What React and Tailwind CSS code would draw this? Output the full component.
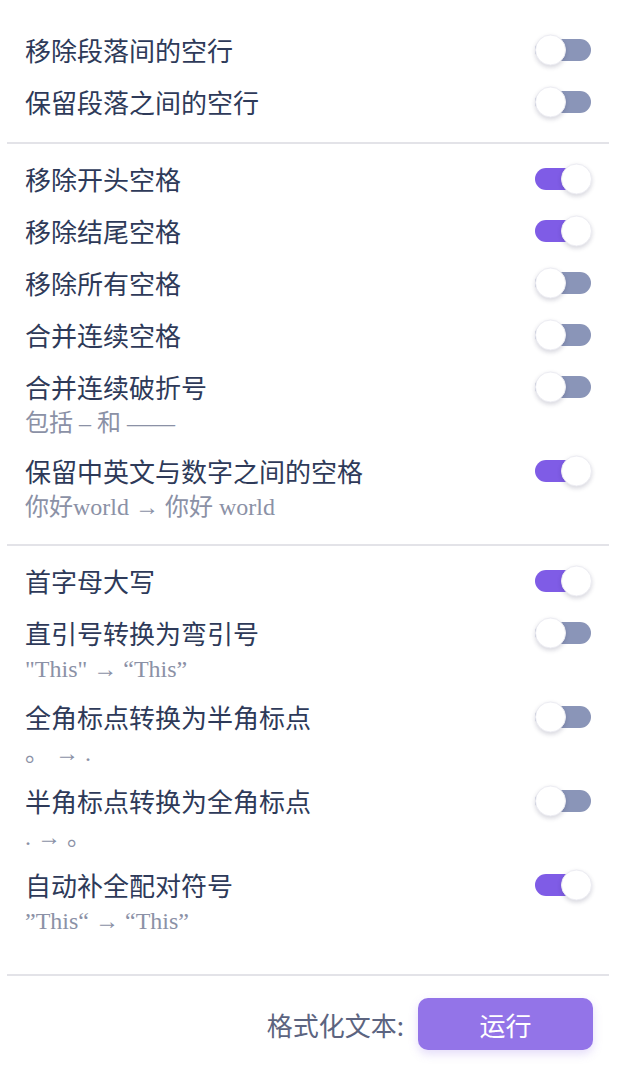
import React from "react";

const sans = { fontFamily: '"Noto Sans CJK SC", "Noto Sans", sans-serif' };

function Toggle({ on }) {
  return (
    <div className="relative w-[56px] h-[22px] shrink-0">
      <div
        className={
          "absolute inset-0 rounded-full " +
          (on ? "bg-[#7f5ce6]" : "bg-[#8a95b8]")
        }
      />
      <div
        className={
          "absolute top-1/2 -translate-y-1/2 w-[31px] h-[31px] rounded-full bg-white border border-[#ececf2] shadow-[0_2px_4px_rgba(40,40,80,0.18)] " +
          (on ? "right-[-1px]" : "left-0")
        }
      />
    </div>
  );
}

function Row({ title, sub, on }) {
  return (
    <div className="flex items-start justify-between py-[8px] px-[18px]">
      <div className="flex flex-col">
        <div className="text-[26px] leading-[36px] text-[#2e3a59]" style={sans}>
          {title}
        </div>
        {sub && (
          <div
            className="text-[24px] leading-[28px] mt-[4px] text-[#8b91a6] whitespace-pre"
            style={{ fontFamily: '"Liberation Serif", "DejaVu Serif", "Noto Sans CJK SC", serif' }}
          >
            {sub}
          </div>
        )}
      </div>
      <div className="h-[36px] flex items-center">
        <Toggle on={on} />
      </div>
    </div>
  );
}

function Divider() {
  return <div className="h-[2px] bg-[#e3e3e8]" />;
}

export default function App() {
  return (
    <div className="w-[622px] h-[1080px] bg-white overflow-hidden">
      <div className="ml-[7px] w-[602px] flex flex-col">
        <div className="pt-[24px] pb-[14px]">
          <Row title="移除段落间的空行" on={false} />
          <Row title="保留段落之间的空行" on={false} />
        </div>
        <Divider />
        <div className="pt-[9px] pb-[15px]">
          <Row title="移除开头空格" on />
          <Row title="移除结尾空格" on />
          <Row title="移除所有空格" on={false} />
          <Row title="合并连续空格" on={false} />
          <Row title="合并连续破折号" sub="包括 – 和 ——" on={false} />
          <Row title="保留中英文与数字之间的空格" sub="你好world → 你好 world" on />
        </div>
        <Divider />
        <div className="pt-[9px] pb-[31px]">
          <Row title="首字母大写" on />
          <Row title="直引号转换为弯引号" sub={'"This" → “This”'} on={false} />
          <Row title="全角标点转换为半角标点" sub="。 → ." on={false} />
          <Row title="半角标点转换为全角标点" sub=". → 。" on={false} />
          <Row title="自动补全配对符号" sub="”This“ → “This”" on />
        </div>
        <Divider />
        <div className="flex items-center justify-end gap-[14px] pt-[22px] pr-[16px]">
          <span className="text-[26px] text-[#5c6480]" style={sans}>
            格式化文本:
          </span>
          <button
            className="w-[175px] h-[52px] rounded-[10px] bg-[#9374e8] text-white text-[26px] shadow-[0_4px_10px_rgba(147,116,232,0.25)]"
            style={sans}
          >
            运行
          </button>
        </div>
      </div>
    </div>
  );
}
